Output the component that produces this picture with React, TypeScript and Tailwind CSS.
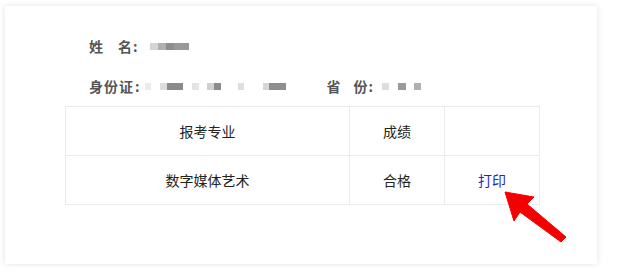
import React from "react";

const font = { fontFamily: '"Noto Sans CJK SC", "Noto Sans", sans-serif' };

function Blur({ w, c, ml = 0 }: { w: number; c: string; ml?: number }) {
  return (
    <span
      className="inline-block h-[7px] blur-[0.4px]"
      style={{ width: w, background: c, marginLeft: ml }}
    />
  );
}

export default function App() {
  return (
    <div className="relative w-[618px] h-[276px] bg-white" style={font}>
      <div className="pl-[5px] pt-[6px]">
        <div className="w-[592px] h-[258px] bg-white shadow-[0_0_6px_rgba(0,0,0,0.12)] pt-[30px]">
          <div className="ml-[84px] h-[20px] flex items-center text-[14px] font-bold text-[#555]">
            <span>姓</span>
            <span className="ml-[15px]">名</span>
            <span className="ml-[1px]">:</span>
            <span className="ml-[12px] flex items-center">
              <Blur w={8} c="#d4d4d4" />
              <Blur w={8} c="#b0b0b0" />
              <Blur w={8} c="#8e8e8e" />
              <Blur w={15} c="#999" />
            </span>
          </div>
          <div className="ml-[84px] mt-[20px] h-[20px] flex items-center text-[14px] font-bold text-[#555]">
            <span className="tracking-[1px]">身份证</span>
            <span className="ml-[1px]">:</span>
            <span className="ml-[5px] flex items-center">
              <Blur w={6} c="#ececec" />
              <Blur w={7} c="#dcdcdc" ml={9} />
              <Blur w={16} c="#8a8a8a" />
              <Blur w={7} c="#e4e4e4" ml={9} />
              <Blur w={7} c="#d0d0d0" ml={8} />
              <Blur w={7} c="#8c8c8c" />
              <Blur w={6} c="#dedede" ml={17} />
              <Blur w={6} c="#d6d6d6" ml={19} />
              <Blur w={17} c="#8e8e8e" />
            </span>
            <span className="ml-[41px]">省</span>
            <span className="ml-[13px]">份</span>
            <span className="ml-[1px]">:</span>
            <span className="ml-[9px] flex items-center">
              <Blur w={7} c="#dedede" />
              <Blur w={8} c="#9a9a9a" ml={9} />
              <Blur w={7} c="#b0b0b0" ml={8} />
            </span>
          </div>
          <table className="ml-[60px] mt-[10px] w-[474px] border-collapse text-[14px] text-[#222] table-fixed">
            <colgroup>
              <col className="w-[284px]" />
              <col className="w-[95px]" />
              <col className="w-[95px]" />
            </colgroup>
            <tbody>
              <tr className="h-[49px]">
                <td className="border border-[#e9ebee] text-center align-middle">报考专业</td>
                <td className="border border-[#e9ebee] text-center align-middle">成绩</td>
                <td className="border border-[#e9ebee]"></td>
              </tr>
              <tr className="h-[49px]">
                <td className="border border-[#e9ebee] text-center align-middle">数字媒体艺术</td>
                <td className="border border-[#e9ebee] text-center align-middle">合格</td>
                <td className="border border-[#e9ebee] text-center align-middle text-[#2a1fcf]">打印</td>
              </tr>
            </tbody>
          </table>
        </div>
      </div>
      <svg className="absolute left-0 top-0" width="618" height="276" viewBox="0 0 618 276">
        <polygon
          points="505,192 534,197 527,204 566,237 561,242 520,212 514,221"
          fill="#f40000"
          stroke="#f40000"
          strokeWidth="1"
          strokeLinejoin="round"
        />
      </svg>
    </div>
  );
}
